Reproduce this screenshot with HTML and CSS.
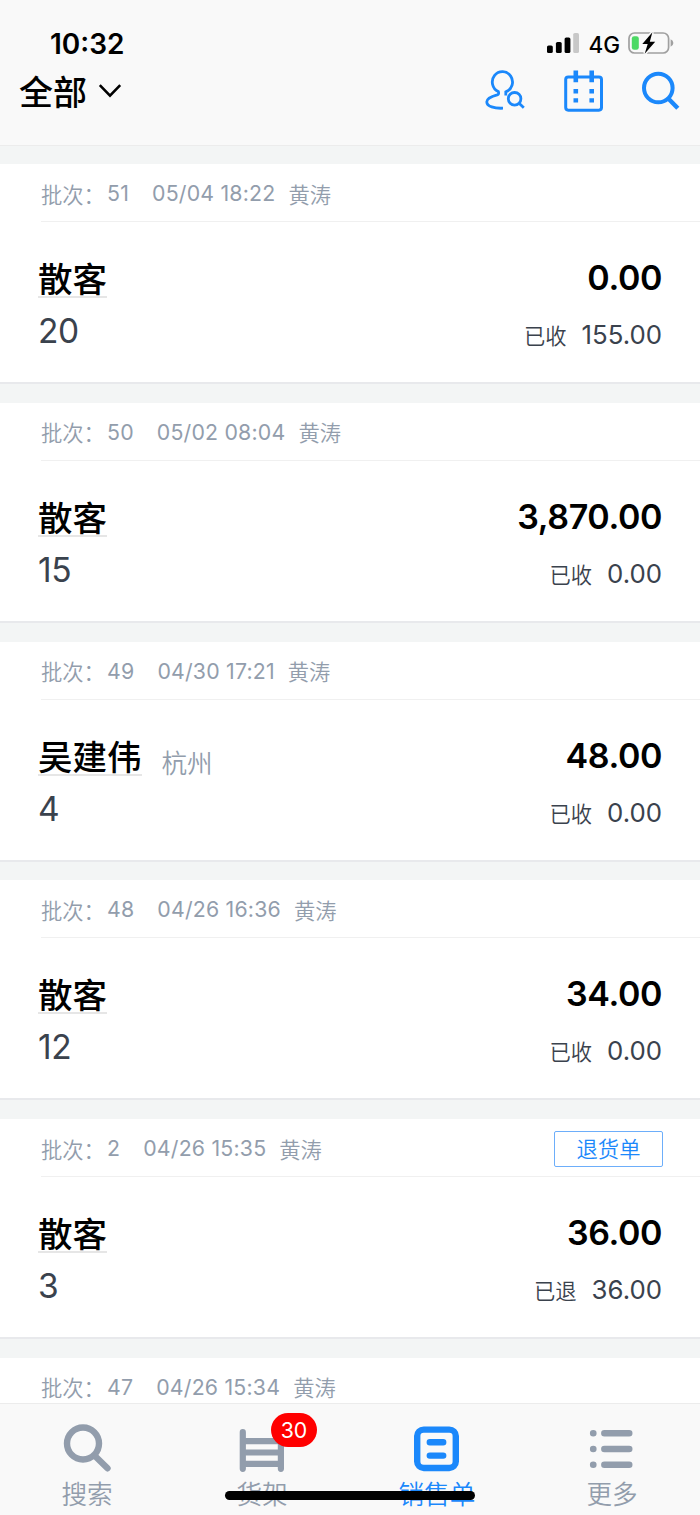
FILE: index.html
```html
<!DOCTYPE html>
<html lang="zh-CN">
<head>
    <meta charset="UTF-8">
    <meta name="viewport" content="width=device-width, initial-scale=1.0">
    <title>销售单</title>
    <link rel="stylesheet" href="styles.css">
</head>
<body>
    <div class="app">
        <header class="header">
            <div class="status-bar">
                <span class="clock">10:32</span>
                <div class="status-right">
                    <svg class="signal" width="32" height="20" viewBox="0 0 32 20">
                        <rect x="0" y="12.5" width="5.8" height="7.5" rx="1.6"/>
                        <rect x="8.9" y="9" width="5.8" height="11" rx="1.6"/>
                        <rect x="17.6" y="4.5" width="5.8" height="15.5" rx="1.6"/>
                        <rect x="26.2" y="0" width="5.8" height="20" rx="1.6" fill="#c8c8c8"/>
                    </svg>
                    <span class="network">4G</span>
                    <svg class="battery" width="46" height="24" viewBox="0 0 46 24">
                        <rect x="1" y="2" width="39.6" height="20" rx="5.5" fill="none" stroke="#a0a0a0" stroke-width="1.7"/>
                        <path d="M42.6 8.3q2.8 1.2 2.8 3.7t-2.8 3.7z" fill="#a0a0a0"/>
                        <rect x="3.8" y="5.2" width="7" height="13.6" rx="2.4" fill="#4cd964"/>
                        <path d="M24.4 1.2 14.3 13h5.4l-3 9.8L27.2 10.8h-5.4z" fill="#000" stroke="#f9f9f9" stroke-width="3" paint-order="stroke"/>
                    </svg>
                </div>
            </div>
            <div class="nav-bar">
                <div class="filter">
                    <span>全部</span>
                    <svg width="24" height="16" viewBox="0 0 24 16" fill="none" stroke="#000" stroke-width="2.6">
                        <path d="M1.8 2.2 12 12.6 22.2 2.2"/>
                    </svg>
                </div>
                <div class="nav-icons">
                    <svg width="40" height="42" viewBox="0 0 40 42" fill="none" stroke="#1b88fb" stroke-width="2.8">
                        <path d="M20.8 25.4V21.9A10.1 10.4 0 1 0 13.3 21.6C14 23.4 13.6 24.4 12.2 24.9C7.5 26.2 1.9 28 1.8 31.8C1.7 36.4 9.5 38.6 18 38.2"/>
                        <circle cx="29.6" cy="28.8" r="6.3"/>
                        <path d="M33.8 33.1 38.8 37.8"/>
                    </svg>
                    <svg width="40" height="42" viewBox="0 0 40 42">
                        <rect x="1.7" y="7" width="35.8" height="33.2" rx="2.6" fill="none" stroke="#1b88fb" stroke-width="3"/>
                        <path d="M9.5.5h4.6v11.7H9.5zM25.4.5H30v11.7h-4.6zM9.5 19h4.6v4.4H9.5zM25.4 19H30v4.4h-4.6zM9.5 28.2h4.6v4.2H9.5zM25.4 28.2H30v4.2h-4.6z" fill="#1b88fb"/>
                    </svg>
                    <svg width="40" height="42" viewBox="0 0 40 42" fill="none" stroke="#1b88fb" stroke-width="4">
                        <circle cx="18.3" cy="18" r="14.3"/>
                        <path d="M28 28.2 37.8 38.3" stroke-width="4.4"/>
                    </svg>
                </div>
            </div>
        </header>

        <main class="order-list">
            <section class="order">
                <div class="order-meta">
                    <span class="label">批次：</span><span class="batch">51</span><span class="date">05/04 18:22</span><span class="clerk">黄涛</span>
                </div>
                <div class="order-body">
                    <div class="order-left">
                        <div class="customer"><span class="name">散客</span></div>
                        <div class="count">20</div>
                    </div>
                    <div class="order-right">
                        <div class="amount">0.00</div>
                        <div class="paid"><span>已收</span><b>155.00</b></div>
                    </div>
                </div>
            </section>
            <section class="order">
                <div class="order-meta">
                    <span class="label">批次：</span><span class="batch">50</span><span class="date">05/02 08:04</span><span class="clerk">黄涛</span>
                </div>
                <div class="order-body">
                    <div class="order-left">
                        <div class="customer"><span class="name">散客</span></div>
                        <div class="count">15</div>
                    </div>
                    <div class="order-right">
                        <div class="amount">3,870.00</div>
                        <div class="paid"><span>已收</span><b>0.00</b></div>
                    </div>
                </div>
            </section>
            <section class="order">
                <div class="order-meta">
                    <span class="label">批次：</span><span class="batch">49</span><span class="date">04/30 17:21</span><span class="clerk">黄涛</span>
                </div>
                <div class="order-body">
                    <div class="order-left">
                        <div class="customer"><span class="name">吴建伟</span><span class="city">杭州</span></div>
                        <div class="count">4</div>
                    </div>
                    <div class="order-right">
                        <div class="amount">48.00</div>
                        <div class="paid"><span>已收</span><b>0.00</b></div>
                    </div>
                </div>
            </section>
            <section class="order">
                <div class="order-meta">
                    <span class="label">批次：</span><span class="batch">48</span><span class="date">04/26 16:36</span><span class="clerk">黄涛</span>
                </div>
                <div class="order-body">
                    <div class="order-left">
                        <div class="customer"><span class="name">散客</span></div>
                        <div class="count">12</div>
                    </div>
                    <div class="order-right">
                        <div class="amount">34.00</div>
                        <div class="paid"><span>已收</span><b>0.00</b></div>
                    </div>
                </div>
            </section>
            <section class="order">
                <div class="order-meta">
                    <span class="label">批次：</span><span class="batch">2</span><span class="date">04/26 15:35</span><span class="clerk">黄涛</span>
                    <span class="tag">退货单</span>
                </div>
                <div class="order-body">
                    <div class="order-left">
                        <div class="customer"><span class="name">散客</span></div>
                        <div class="count">3</div>
                    </div>
                    <div class="order-right">
                        <div class="amount">36.00</div>
                        <div class="paid"><span>已退</span><b>36.00</b></div>
                    </div>
                </div>
            </section>
            <section class="order">
                <div class="order-meta">
                    <span class="label">批次：</span><span class="batch">47</span><span class="date">04/26 15:34</span><span class="clerk">黄涛</span>
                </div>
            </section>
        </main>

        <nav class="tab-bar">
            <div class="tab">
                <svg width="50" height="50" viewBox="0 0 50 50" fill="none" stroke="#929dac" stroke-width="6.4" stroke-linecap="round">
                    <circle cx="21" cy="21.5" r="16"/>
                    <path d="M34 35 45.5 46.3"/>
                </svg>
                <span>搜索</span>
            </div>
            <div class="tab">
                <svg width="50" height="50" viewBox="0 0 50 50" fill="none" stroke="#929dac" stroke-width="6.2">
                    <path d="M5.8 10.2v36.6M43.9 10.2v36.6" stroke-linecap="round"/>
                    <path d="M6 19.2h38M6 30.5h38M6 41.8h38"/>
                </svg>
                <span>货架</span>
                <i class="badge">30</i>
            </div>
            <div class="tab active">
                <svg width="50" height="50" viewBox="0 0 50 50" fill="none" stroke="#1b88fb" stroke-width="6.4">
                    <rect x="5.2" y="7.6" width="38.6" height="38.4" rx="6.5"/>
                    <path d="M17.8 20.3h13.4M17.8 33.6h13.4" stroke-linecap="round"/>
                </svg>
                <span>销售单</span>
            </div>
            <div class="tab">
                <svg width="50" height="50" viewBox="0 0 50 50" fill="none" stroke="#929dac" stroke-width="6.6" stroke-linecap="round">
                    <path d="M6.2 11.2h.1M6.2 27h.1M6.2 42.8h.1M17.4 11.2h24.8M17.4 27h24.8M17.4 42.8h24.8"/>
                </svg>
                <span>更多</span>
            </div>
            <div class="home-indicator"></div>
        </nav>
    </div>
</body>
</html>
```

FILE: styles.css
```css
* {
    box-sizing: border-box;
}

body {
    margin: 0;
    font-family: Inter, "Noto Sans CJK SC", sans-serif;
    background: #f3f5f5;
    color: #000;
}

.app {
    width: 700px;
    height: 1515px;
    display: flex;
    flex-direction: column;
    overflow: hidden;
}

/* header */
.header {
    flex: none;
    height: 146px;
    background: #f9f9f9;
    border-bottom: 1px solid #ececec;
}

.status-bar {
    display: flex;
    justify-content: space-between;
    height: 60px;
    padding: 27px 26px 0 50px;
}

.clock {
    font-size: 28px;
    font-weight: 600;
    line-height: 34px;
}

.status-right {
    display: flex;
    align-items: center;
    height: 34px;
    margin-top: -1px;
}

.signal {
    margin: 0 -1px 0 0;
}

.network {
    margin: 2px 8px 0 10px;
    font-size: 22.5px;
    font-weight: 500;
}

.nav-bar {
    display: flex;
    align-items: center;
    justify-content: space-between;
    height: 62px;
    padding: 0 20px;
}

.filter {
    display: flex;
    align-items: center;
    gap: 11px;
    font-size: 34px;
    font-weight: 500;
}

.filter span {
    margin: -2px 0 0 -1px;
}

.nav-icons {
    display: flex;
    gap: 38px;
    margin-left: auto;
}

.nav-icons svg:nth-child(2) {
    margin: 0 -2px 0 1px;
}

/* order list */
.order-list {
    flex: 1;
    min-height: 0;
    padding-top: 18px;
    overflow: hidden;
}

.order {
    height: 220px;
    margin-bottom: 18.8px;
    background: #fff;
    border-bottom: 2px solid #e8e9ec;
}

.order-meta {
    display: flex;
    align-items: center;
    height: 58px;
    margin-left: 41px;
    padding: 1px 37px 0 0;
    border-bottom: 1px solid #f0f0f0;
    font-size: 21.3px;
    letter-spacing: 0.2px;
    color: #929dac;
}

.order-meta .label {
    width: 66px;
    font-weight: 350;
    letter-spacing: 0;
}

.order-meta .date {
    margin: 0 13px 0 23px;
}

.order-meta .clerk {
    font-weight: 350;
    letter-spacing: 0;
}

.tag {
    width: 109px;
    height: 36px;
    margin: 1px 0 0 auto;
    border: 1px solid #6daefa;
    border-radius: 2px;
    color: #1b88fb;
    font-weight: 350;
    letter-spacing: 0;
    line-height: 35px;
    text-align: center;
}

.order-body {
    display: flex;
    justify-content: space-between;
    padding: 32px 38px 0;
}

.customer {
    display: flex;
    align-items: flex-end;
    height: 44px;
}

.name {
    height: 44px;
    border-bottom: 2px solid #e6e6e6;
    font-size: 34.5px;
    font-weight: 500;
    line-height: 52px;
}

.city {
    margin: 0 0 -2px 20px;
    font-size: 25.6px;
    font-weight: 350;
    line-height: 28px;
    color: #929dac;
}

.count {
    margin-top: 12px;
    font-size: 33.5px;
    letter-spacing: -0.5px;
    line-height: 42px;
    color: #3a424d;
}

.order-right {
    text-align: right;
}

.amount {
    font-size: 34px;
    font-weight: 600;
    letter-spacing: -0.4px;
    line-height: 48px;
}

.paid {
    display: flex;
    align-items: center;
    justify-content: flex-end;
    gap: 15px;
    margin-top: 14px;
    font-size: 21.3px;
    line-height: 36px;
    color: #3a424d;
}

.paid span {
    padding-top: 2px;
    font-weight: 350;
}

.paid b {
    font-size: 25.8px;
    font-weight: 400;
}

/* bottom tabs */
.tab-bar {
    position: relative;
    flex: none;
    display: flex;
    height: 112px;
    background: #f9f9f9;
    border-top: 1px solid #ececec;
}

.tab {
    position: relative;
    flex: 1;
    display: flex;
    flex-direction: column;
    align-items: center;
    padding: 18px 1px 0 0;
    font-size: 25.6px;
    font-weight: 350;
    color: #929dac;
}

.tab span {
    margin-top: 4px;
    line-height: 38px;
}

.tab.active {
    color: #1b88fb;
}

.badge {
    position: absolute;
    left: 96px;
    top: 9px;
    width: 46px;
    height: 34px;
    border-radius: 17px;
    background: #f00;
    color: #fff;
    font-size: 21.3px;
    font-style: normal;
    font-weight: 400;
    line-height: 34px;
    text-align: center;
}

.home-indicator {
    position: absolute;
    left: 225px;
    top: 87px;
    width: 250px;
    height: 9px;
    border-radius: 5px;
    background: #000;
}
```
